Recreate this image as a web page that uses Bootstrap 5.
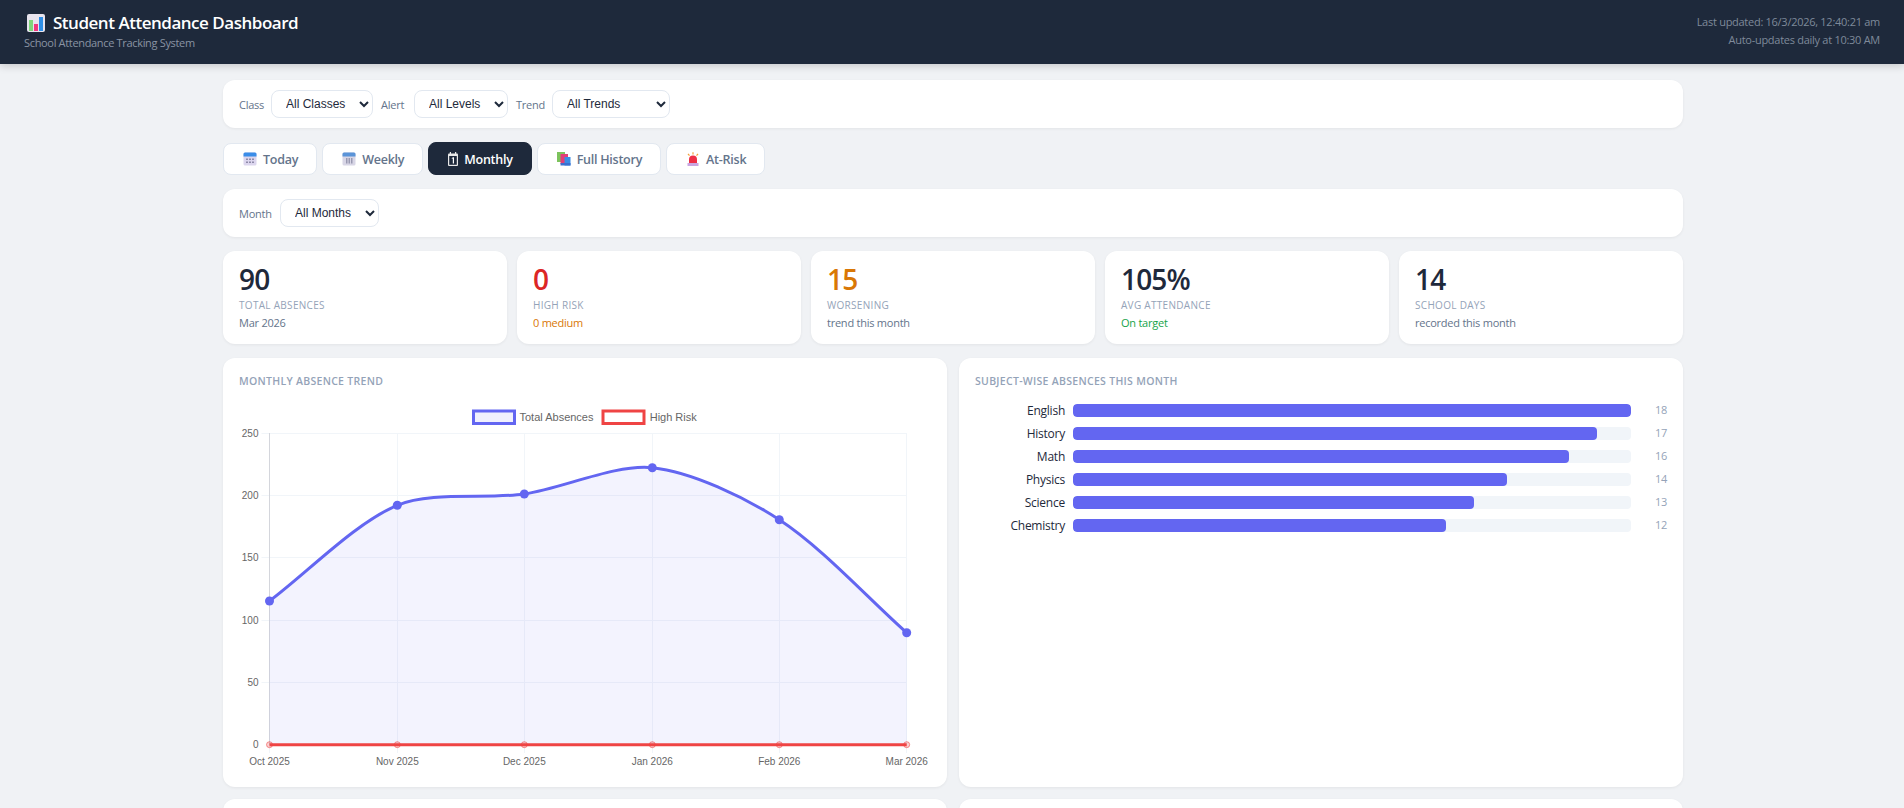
<!DOCTYPE html>
<html lang="en">
<head>
<meta charset="utf-8">
<title>Student Attendance Dashboard</title>
<link rel="stylesheet" href="https://cdn.jsdelivr.net/npm/bootstrap@5.3.0/dist/css/bootstrap.min.css">
<style>
body{background:#f0f2f5;font-family:"Open Sans","Noto Sans",sans-serif;color:#1e293b;font-size:12px;letter-spacing:-.02em}
.top-bar{background:#1e293b;height:64px;padding:0 24px;box-shadow:0 2px 8px rgba(0,0,0,.18)}
.top-title{font-size:17px;font-weight:600;color:#fff;line-height:22px;margin-top:12px;letter-spacing:-.028em}
.top-title svg{width:18px;height:18px;margin:0 8px 0 3px;vertical-align:-3px}
.top-sub{font-size:11px;color:#8a94a3;line-height:16px;margin-top:1px;letter-spacing:-.03em}
.top-meta{font-size:11px;color:#7f8a9a;line-height:18px;padding-top:13px;letter-spacing:-.025em}
.page-wrap{width:1460px;margin:16px auto 0 223px}
.panel{border:0;border-radius:12px;box-shadow:0 1px 3px rgba(0,0,0,.06);background:#fff}
.filter-panel{height:48px;padding:0 16px;gap:8px;margin-bottom:14px}
.filter-label{font-size:11px;color:#64748b;margin-top:3px;flex:none;white-space:nowrap}
.lbl-class{width:24px}.lbl-alert{width:25px}.lbl-trend{width:28px}.lbl-month{width:33px}
.form-select.sel-native{appearance:auto;background-image:none;font-family:"Liberation Sans",sans-serif;font-size:12px;letter-spacing:0;color:#1e293b;height:28px;padding:0 6px 0 10px;border:1px solid #e2e8f0;border-radius:8px;width:102px;margin-top:0}
.form-select.sel-level{width:94px}
.form-select.sel-trend{width:118px}
.form-select.sel-month{width:99px}
.tab-row{gap:5px;margin-bottom:14px;height:33px}
.btn.tab-btn{height:32px;margin-top:.5px;padding:3px 18px 0;border:1px solid #e2e8f0;border-radius:8px;background:#fff;color:#64748b;font-size:12.5px;font-weight:600;letter-spacing:-.02em;display:flex;align-items:center}
.btn.tab-btn.active{background:#1e293b;border-color:#1e293b;color:#fff;height:33px;margin-top:0}
.tab-btn svg{width:14px;height:14px;margin:-2px 6px 0 1px;flex:none}
.tab-btn svg.ico-narrow{width:10px}
.kpi-row{--bs-gutter-x:10px;--bs-gutter-y:0;margin-bottom:14px}
.kpi-panel{height:93px;padding:10px 16px}
.kpi-num{font-size:28px;font-weight:600;line-height:36px;letter-spacing:-.03em}
.kpi-lbl{font-size:10px;line-height:14px;color:#94a3b8;text-transform:uppercase;letter-spacing:.03em;margin-top:1px}
.kpi-note{font-size:11px;line-height:16px;color:#64748b;margin-top:3px}
.kpi-note.tone-amber{color:#d97706}.kpi-note.tone-green{color:#16a34a}
.tone-red{color:#dc2626}.tone-amber{color:#d97706}.tone-green{color:#16a34a}
.chart-row{--bs-gutter-x:12px;--bs-gutter-y:12px}
.chart-panel{height:429px;padding:16px}
.chart-title{font-size:10.5px;font-weight:600;line-height:14px;color:#94a3b8;text-transform:uppercase;letter-spacing:.028em;margin-bottom:12px}
.chart-svg{display:block;width:692px;height:371px}
.chart-svg text{font-family:"Liberation Sans",sans-serif;letter-spacing:0}
.bar-list{padding-top:4px;gap:10px}
.bar-line{height:13px;gap:8px}
.bar-name{width:90px;text-align:right;font-size:12px;line-height:13px;flex:none}
.progress.bar-track{height:13px;flex:1;background:#f1f5f9;border-radius:4px}
.progress-bar.bar-fill{background:#6366f1;border-radius:4px}
.bar-num{width:24px;margin-left:4px;text-align:right;font-size:11px;color:#94a3b8;flex:none}
.below-panel{height:300px}
</style>
</head>
<body>
<header class="top-bar d-flex justify-content-between">
  <div>
    <div class="top-title"><svg viewBox="0 0 18 18"><rect x="0" y="0" width="18" height="18" rx="2" fill="#e8e4ee"/><rect x="2" y="6" width="4" height="11" fill="#7fd67a"/><rect x="7" y="10" width="4" height="7" fill="#f0377f"/><rect x="12" y="3" width="4" height="14" fill="#2f8fe6"/></svg>Student Attendance Dashboard</div>
    <div class="top-sub">School Attendance Tracking System</div>
  </div>
  <div class="top-meta text-end">
    <div>Last updated: 16/3/2026, 12:40:21 am</div>
    <div>Auto-updates daily at 10:30 AM</div>
  </div>
</header>

<main class="page-wrap">
  <div class="card panel filter-panel flex-row align-items-center">
    <label class="filter-label lbl-class">Class</label>
    <select class="form-select sel-native"><option>All Classes</option></select>
    <label class="filter-label lbl-alert">Alert</label>
    <select class="form-select sel-native sel-level"><option>All Levels</option></select>
    <label class="filter-label lbl-trend">Trend</label>
    <select class="form-select sel-native sel-trend"><option>All Trends</option></select>
  </div>

  <div class="d-flex tab-row">
    <button class="btn tab-btn"><svg viewBox="0 0 14 14"><rect x=".5" y=".5" width="13" height="13" rx="1.5" fill="#dcd6ee"/><path d="M.5 2a1.5 1.5 0 0 1 1.5-1.5h10A1.5 1.5 0 0 1 13.500 2v2.500H.5z" fill="#3b8de8"/><path d="M3 6.500h2v1.500H3zM6 6.500h2v1.500H6zM9 6.500h2v1.500H9zM3 9.500h2V11H3zM6 9.500h2V11H6zM9 9.500h2V11H9z" fill="#8e8aa8"/></svg>Today</button>
    <button class="btn tab-btn"><svg viewBox="0 0 14 14"><rect x=".5" y=".5" width="13" height="13" rx="1.500" fill="#d8d6e6"/><path d="M.5 2a1.5 1.5 0 0 1 1.5-1.5h10A1.500 1.500 0 0 1 13.500 2v2.500H.5z" fill="#5b94d8"/><path d="M4 6h1.500v5.500H4zM6.500 6H8v5.500H6.500zM9 6h1.500v5.500H9z" fill="#9a9ab2"/></svg>Weekly</button>
    <button class="btn tab-btn active"><svg class="ico-narrow" viewBox="0 0 10 14"><rect x="0" y="1.500" width="10" height="12.500" rx="1" fill="#e8e8e8"/><rect x="1.200" y="4" width="7.600" height="8.800" fill="#1e293b"/><path d="M1.800 0H3v2.500H1.800zM7 0h1.200v2.500H7z" fill="#e8e8e8"/><path d="M3.800 6l1.400-.7h.8v6.200H4.800V6.400l-1 .4z" fill="#fff"/></svg>Monthly</button>
    <button class="btn tab-btn"><svg viewBox="0 0 14 14"><rect x="0" y="0" width="8" height="10" fill="#7cc35c"/><rect x="3.500" y="2" width="7.500" height="10" fill="#e23e78"/><rect x="7.500" y="5" width="6" height="8.500" fill="#3a8ce4"/><rect x="3.500" y="11" width="10" height="2.500" fill="#3a6fd0"/></svg>Full History</button>
    <button class="btn tab-btn"><svg viewBox="0 0 14 14"><path d="M3 11V7.500a4 4 0 0 1 8 0V11z" fill="#ee2f45"/><rect x="1.500" y="11" width="11" height="3" fill="#c9a5e0"/><path d="M7 .2v2.300M2 1.800l1.500 1.900M12 1.800l-1.500 1.900" stroke="#f3a13a" stroke-width="1.200" fill="none"/></svg>At-Risk</button>
  </div>

  <div class="card panel filter-panel flex-row align-items-center">
    <label class="filter-label lbl-month">Month</label>
    <select class="form-select sel-native sel-month"><option>All Months</option></select>
  </div>

  <div class="row row-cols-5 kpi-row">
    <div class="col"><div class="card panel kpi-panel"><div class="kpi-num">90</div><div class="kpi-lbl">Total Absences</div><div class="kpi-note">Mar 2026</div></div></div>
    <div class="col"><div class="card panel kpi-panel"><div class="kpi-num tone-red">0</div><div class="kpi-lbl">High Risk</div><div class="kpi-note tone-amber">0 medium</div></div></div>
    <div class="col"><div class="card panel kpi-panel"><div class="kpi-num tone-amber">15</div><div class="kpi-lbl">Worsening</div><div class="kpi-note">trend this month</div></div></div>
    <div class="col"><div class="card panel kpi-panel"><div class="kpi-num">105%</div><div class="kpi-lbl">Avg Attendance</div><div class="kpi-note tone-green">On target</div></div></div>
    <div class="col"><div class="card panel kpi-panel"><div class="kpi-num">14</div><div class="kpi-lbl">School Days</div><div class="kpi-note">recorded this month</div></div></div>
  </div>

  <div class="row row-cols-2 chart-row">
    <div class="col">
      <div class="card panel chart-panel">
        <div class="chart-title">Monthly Absence Trend</div>
        <svg class="chart-svg" viewBox="239 400 692 371" id="trend">
          <g stroke="#f1f5f9" stroke-width="1" fill="none">
            <path d="M261.500 433.500H907M261.500 495.500H907M261.500 557.500H907M261.500 620.500H907M261.500 682.500H907"/>
            <path d="M397.500 433V753M524.500 433V753M652.500 433V753M779.500 433V753M906.500 433V753"/>
            <path d="M269.500 745V753"/>
          </g>
          <path d="M269.500 433V745" stroke="#d4d6dc" stroke-width="1"/>
          <path id="areaPath" fill="#6366f1" fill-opacity=".08"/>
          <path id="linePath" fill="none" stroke="#6366f1" stroke-width="3"/>
          <g fill="#6366f1">
            <circle cx="269.500" cy="601" r="4.500"/><circle cx="397.300" cy="505.300" r="4.500"/><circle cx="524.300" cy="494" r="4.500"/><circle cx="652.300" cy="467.700" r="4.500"/><circle cx="779.300" cy="519.700" r="4.500"/><circle cx="906.700" cy="632.700" r="4.500"/>
          </g>
          <path d="M269.500 744.700H906.700" stroke="#ef4444" stroke-width="3" fill="none"/>
          <g fill="#ef4444" fill-opacity=".25" stroke="#ef4444" stroke-opacity=".55">
            <circle cx="269.500" cy="744.700" r="3"/><circle cx="397.300" cy="744.700" r="3"/><circle cx="524.300" cy="744.700" r="3"/><circle cx="652.300" cy="744.700" r="3"/><circle cx="779.300" cy="744.700" r="3"/><circle cx="906.700" cy="744.700" r="3"/>
          </g>
          <rect x="473.500" y="411" width="41" height="12.500" fill="#f0f0fd" stroke="#6366f1" stroke-width="3"/>
          <text x="519.500" y="421" font-size="11" fill="#666">Total Absences</text>
          <rect x="603" y="411" width="41" height="12.500" fill="#fff" stroke="#ef4444" stroke-width="3"/>
          <text x="649.700" y="421" font-size="11" fill="#666">High Risk</text>
          <g font-size="10" fill="#666" text-anchor="end">
            <text x="258.500" y="436.500">250</text><text x="258.500" y="499">200</text><text x="258.500" y="561">150</text><text x="258.500" y="623.500">100</text><text x="258.500" y="685.500">50</text><text x="258.500" y="748">0</text>
          </g>
          <g font-size="10" fill="#666" text-anchor="middle">
            <text x="269.500" y="765">Oct 2025</text><text x="397.300" y="765">Nov 2025</text><text x="524.300" y="765">Dec 2025</text><text x="652.300" y="765">Jan 2026</text><text x="779.300" y="765">Feb 2026</text><text x="906.700" y="765">Mar 2026</text>
          </g>
        </svg>
      </div>
    </div>
    <div class="col">
      <div class="card panel chart-panel">
        <div class="chart-title">Subject-wise Absences This Month</div>
        <div class="d-flex flex-column bar-list">
          <div class="d-flex align-items-center bar-line"><span class="bar-name">English</span><div class="progress bar-track"><div class="progress-bar bar-fill" style="width:100%"></div></div><span class="bar-num">18</span></div>
          <div class="d-flex align-items-center bar-line"><span class="bar-name">History</span><div class="progress bar-track"><div class="progress-bar bar-fill" style="width:93.9%"></div></div><span class="bar-num">17</span></div>
          <div class="d-flex align-items-center bar-line"><span class="bar-name">Math</span><div class="progress bar-track"><div class="progress-bar bar-fill" style="width:88.8%"></div></div><span class="bar-num">16</span></div>
          <div class="d-flex align-items-center bar-line"><span class="bar-name">Physics</span><div class="progress bar-track"><div class="progress-bar bar-fill" style="width:77.8%"></div></div><span class="bar-num">14</span></div>
          <div class="d-flex align-items-center bar-line"><span class="bar-name">Science</span><div class="progress bar-track"><div class="progress-bar bar-fill" style="width:71.8%"></div></div><span class="bar-num">13</span></div>
          <div class="d-flex align-items-center bar-line"><span class="bar-name">Chemistry</span><div class="progress bar-track"><div class="progress-bar bar-fill" style="width:66.800%"></div></div><span class="bar-num">12</span></div>
        </div>
      </div>
    </div>
    <div class="col"><div class="card panel below-panel"></div></div>
    <div class="col"><div class="card panel below-panel"></div></div>
  </div>
</main>
<script>
(function(){
  var p=[[269.5,601],[397.3,505.3],[524.3,494],[652.3,467.7],[779.3,519.7],[906.7,632.7]],t=0.3,cp=[];
  for(var i=0;i<p.length;i++){
    var a=p[Math.max(i-1,0)],b=p[i],c=p[Math.min(i+1,p.length-1)];
    var d1=Math.hypot(b[0]-a[0],b[1]-a[1]),d2=Math.hypot(c[0]-b[0],c[1]-b[1]);
    var s=d1+d2||1,f1=t*d1/s,f2=t*d2/s;
    cp.push({pr:[b[0]-f1*(c[0]-a[0]),b[1]-f1*(c[1]-a[1])],nx:[b[0]+f2*(c[0]-a[0]),b[1]+f2*(c[1]-a[1])]});
  }
  var d="M"+p[0].join(" ");
  for(var j=1;j<p.length;j++){d+="C"+cp[j-1].nx.join(" ")+" "+cp[j].pr.join(" ")+" "+p[j].join(" ");}
  document.getElementById("linePath").setAttribute("d",d);
  document.getElementById("areaPath").setAttribute("d",d+"L906.7 744.7L269.5 744.7Z");
})();
</script>
</body>
</html>
